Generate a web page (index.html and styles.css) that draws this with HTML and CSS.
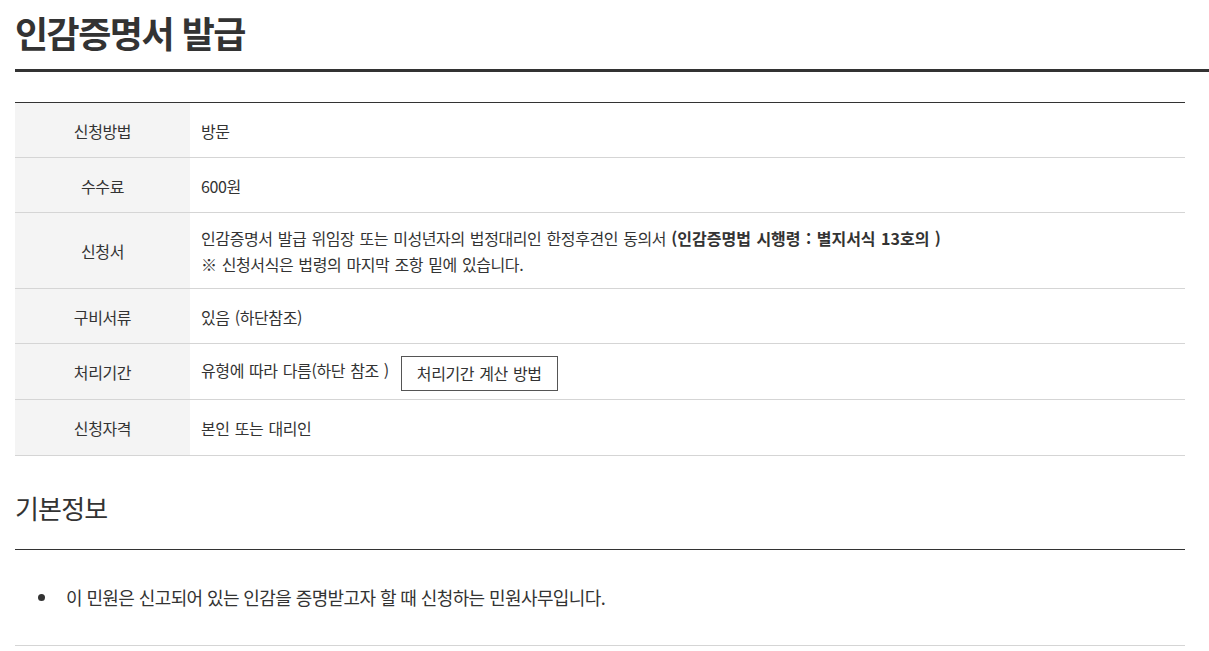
FILE: index.html
```html
<!DOCTYPE html>
<html lang="ko">
<head>
<meta charset="utf-8">
<title>인감증명서 발급</title>
<link rel="stylesheet" href="styles.css">
</head>
<body>
<div class="page">
  <h1 class="page-title">인감증명서 발급</h1>
  <div class="content">
    <table class="info-table">
      <tbody>
        <tr><th>신청방법</th><td>방문</td></tr>
        <tr><th>수수료</th><td>600원</td></tr>
        <tr><th>신청서</th><td>인감증명서 발급 위임장 또는 미성년자의 법정대리인 한정후견인 동의서 <strong>(인감증명법 시행령 : 별지서식 13호의 )</strong><br>※ 신청서식은 법령의 마지막 조항 밑에 있습니다.</td></tr>
        <tr><th>구비서류</th><td>있음 (하단참조)</td></tr>
        <tr class="row-btn"><th>처리기간</th><td>유형에 따라 다름(하단 참조 )<button class="btn" type="button">처리기간 계산 방법</button></td></tr>
        <tr class="row-last"><th>신청자격</th><td>본인 또는 대리인</td></tr>
      </tbody>
    </table>
    <h2 class="section-title">기본정보</h2>
    <ul class="bullet-list">
      <li>이 민원은 신고되어 있는 인감을 증명받고자 할 때 신청하는 민원사무입니다.</li>
    </ul>
  </div>
</div>
</body>
</html>
```
FILE: styles.css
```css
html, body {
  margin: 0;
  padding: 0;
  background: #fff;
}
body {
  font-family: "Noto Sans CJK KR", "Noto Sans", sans-serif;
  color: #333;
}
.page {
  padding-left: 15px;
}
.page-title {
  margin: 0;
  padding-top: 12px;
  padding-bottom: 16px;
  font-size: 36px;
  line-height: 41px;
  font-weight: 700;
  letter-spacing: -1.5px;
  color: #333;
  border-bottom: 3px solid #333;
}
.content {
  margin-right: 24px;
  padding-top: 30px;
}
.info-table {
  width: 100%;
  border-collapse: collapse;
  border-top: 1px solid #333;
  border-bottom: 1px solid #333;
  font-size: 16px;
  letter-spacing: -0.4px;
  word-spacing: 1px;
}
.info-table th,
.info-table td {
  height: 55px;
  box-sizing: border-box;
  padding: 12px 11px 11px;
  line-height: 26px;
  border-bottom: 1px solid #d5d5d5;
  vertical-align: middle;
  color: #333;
}
.info-table th {
  width: 175px;
  background: #f4f4f4;
  font-weight: 400;
  text-align: center;
  padding-left: 0;
  padding-right: 0;
}
.info-table td {
  text-align: left;
}
.info-table .row-btn th,
.info-table .row-btn td {
  height: 56px;
  padding-top: 10px;
  padding-bottom: 10px;
}
.info-table .row-last th,
.info-table .row-last td {
  height: 56px;
}
.info-table strong {
  font-weight: 700;
  letter-spacing: 0;
}
.btn {
  margin: -5px 0 -5px 12px;
  height: 35px;
  padding: 0 15px;
  border: 1px solid #555;
  background: #fff;
  font-family: inherit;
  font-size: 16px;
  letter-spacing: -0.4px;
  word-spacing: 1px;
  color: #333;
  vertical-align: middle;
  cursor: pointer;
}
.section-title {
  margin: 34px 0 0;
  padding-bottom: 24px;
  font-size: 26px;
  line-height: 35px;
  font-weight: 400;
  letter-spacing: -0.8px;
  color: #333;
  border-bottom: 1px solid #333;
}
.bullet-list {
  list-style: none;
  margin: 0;
  padding: 34px 0 34px;
  border-bottom: 1px solid #d5d5d5;
}
.bullet-list li {
  position: relative;
  padding-left: 51px;
  font-size: 18px;
  line-height: 27px;
  letter-spacing: -0.6px;
  color: #333;
}
.bullet-list li::before {
  content: "";
  position: absolute;
  left: 23px;
  top: 10px;
  width: 7px;
  height: 7px;
  border-radius: 50%;
  background: #333;
}
```
